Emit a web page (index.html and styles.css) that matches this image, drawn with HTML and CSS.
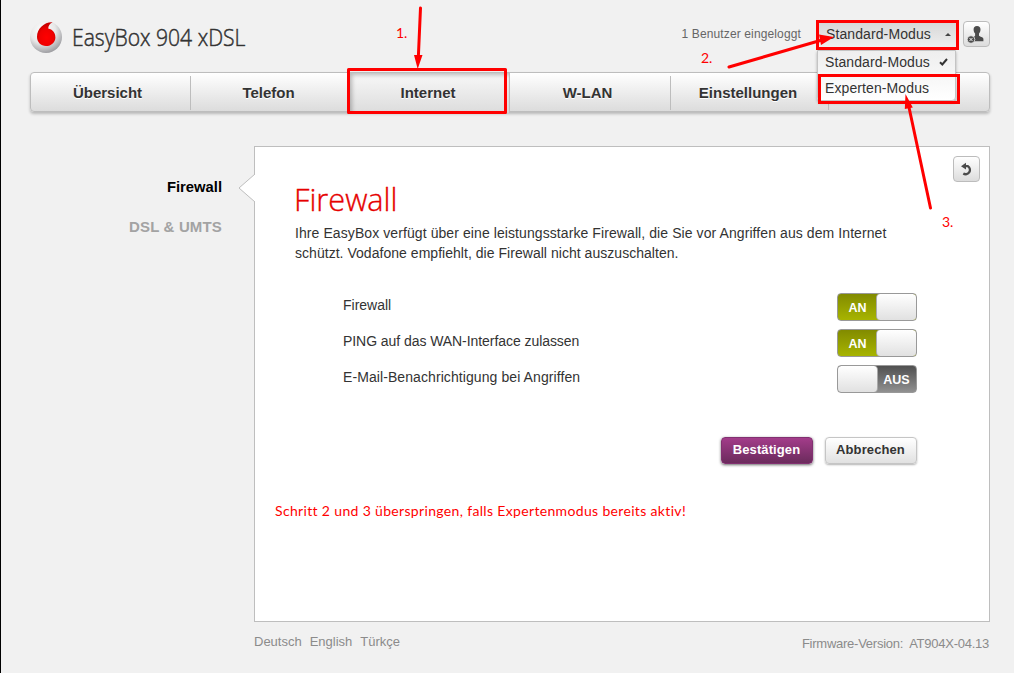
FILE: index.html
```html
<!DOCTYPE html>
<html lang="de">
<head>
<meta charset="utf-8">
<title>EasyBox 904 xDSL</title>
<link rel="stylesheet" href="styles.css">
</head>
<body>
<div class="page">
  <header class="header">
    <svg class="logo" width="34" height="34" viewBox="0 0 34 34">
      <defs>
        <radialGradient id="ball" cx=".4" cy=".3" r=".72"><stop offset="0" stop-color="#fff"/><stop offset=".55" stop-color="#e8e8e8"/><stop offset="1" stop-color="#9c9ca0"/></radialGradient>
        <radialGradient id="drop" cx=".52" cy=".65" r=".55"><stop offset="0" stop-color="#f00"/><stop offset=".7" stop-color="#ee0000"/><stop offset="1" stop-color="#c80000"/></radialGradient>
      </defs>
      <circle cx="16" cy="17" r="16" fill="url(#ball)"/>
      <path d="M22.600 2.200C15 1.600 7 8 7 16.800C7 22.300 11 26 16 26C21.500 26 25.400 22.100 25.400 17.400C25.400 12.600 22.500 9.600 18.200 8.600C18.300 5.700 20 3.200 22.600 2.200Z" fill="url(#drop)"/>
    </svg>
    <h1 class="brand"><span>EasyBox 904 xDSL</span></h1>
    <span class="logged">1 Benutzer eingeloggt</span>
    <div class="mode">
      <div class="mode-current"><span class="mode-text">Standard-Modus</span><i class="caret"></i></div>
      <div class="mode-menu">
        <div class="mode-item"><span class="mode-text">Standard-Modus</span><svg width="9" height="8" viewBox="0 0 9 8"><path d="M1 4.300L3.300 6.500L8 1" fill="none" stroke="#333" stroke-width="2"/></svg></div>
        <div class="mode-item"><span class="mode-text">Experten-Modus</span></div>
      </div>
    </div>
    <button class="icon-button user">
      <svg width="25" height="24" viewBox="0 0 25 24"><path d="M13 4c2.300 0 3.500 1.300 3.500 3.600c0 2.100-.9 3.400-1.500 4v2.200c.6.900 4.400 1.300 4.400 3.300v2.200H7.200v-2.200c0-1.700 3.500-2.300 3.900-3.300v-2.200c-.8-.8-1.500-2-1.500-4C9.600 5.300 10.700 4 13 4Z" fill="#4b4b4b"/><circle cx="7" cy="17.500" r="3.800" fill="#4b4b4b" stroke="#eee" stroke-width=".8"/><path d="M5.400 15.900l3.200 3.200m0-3.200l-3.200 3.200" stroke="#eee" stroke-width="1"/></svg>
    </button>
  </header>
  <nav class="nav">
    <a class="tab first">Übersicht</a>
    <a class="tab telefon">Telefon</a>
    <a class="tab active">Internet</a>
    <a class="tab wlan">W-LAN</a>
    <a class="tab setup">Einstellungen</a>
    <a class="tab last"></a>
  </nav>
  <div class="columns">
    <aside class="side">
      <a class="side-link current">Firewall</a>
      <a class="side-link muted">DSL &amp; UMTS</a>
    </aside>
    <main class="panel">
      <svg class="pointer" width="18" height="30" viewBox="0 0 18 30"><path d="M17 1L1 15L17 29" fill="#fff" stroke="#bebebe"/></svg>
      <button class="icon-button reload"><svg width="25" height="25" viewBox="0 0 25 25"><path d="M10 9.200h3.900a4.300 4.300 0 1 1-4.600 7.400" fill="none" stroke="#4b4b4b" stroke-width="2.300"/><path d="M7 9.200L12 5.800V12.600Z" fill="#4b4b4b"/></svg></button>
      <h2 class="title"><span>Firewall</span></h2>
      <p class="intro"><span class="wide">Ihre EasyBox verfügt über eine leistungsstarke Firewall, die Sie vor Angriffen aus dem Internet</span><br><span class="normal">schützt. Vodafone empfiehlt, die Firewall nicht auszuschalten.</span></p>
      <div class="settings">
        <div class="setting"><span>Firewall</span><div class="switch on"><b>AN</b><i></i></div></div>
        <div class="setting"><span class="tight">PING auf das WAN-Interface zulassen</span><div class="switch on"><b>AN</b><i></i></div></div>
        <div class="setting"><span class="wide">E-Mail-Benachrichtigung bei Angriffen</span><div class="switch off"><i></i><b>AUS</b></div></div>
      </div>
      <div class="actions">
        <button class="button primary">Bestätigen</button>
        <button class="button">Abbrechen</button>
      </div>
      <p class="note">Schritt 2 und 3 überspringen, falls Expertenmodus bereits aktiv!</p>
    </main>
  </div>
  <footer class="footer">
    <div class="languages"><a>Deutsch</a><a>English</a><a>Türkçe</a></div>
    <span class="version">Firmware-Version:&nbsp; AT904X-04.13</span>
  </footer>
  <svg class="marks" width="1014" height="673" viewBox="0 0 1014 673">
    <g fill="none" stroke="#f00" stroke-width="3">
      <rect x="348.500" y="69.500" width="157" height="43" stroke-linejoin="round"/>
      <rect x="817.500" y="21.500" width="140" height="27"/>
      <rect x="819.500" y="75.500" width="139" height="27"/>
      <path d="M420.500 8L418.300 58M729 67L822 40M930.500 208L908.500 105" stroke-linecap="round"/>
    </g>
    <path d="M414 55H422.500L417.700 69ZM819 34.500L834 37L821 45ZM905.500 94L904.800 109L912.800 107.500Z" fill="#f00"/>
    <g class="steps">
      <text x="396" y="38">1.</text>
      <text x="701" y="63">2.</text>
      <text x="942" y="227">3.</text>
    </g>
  </svg>
</div>
</body>
</html>
```
FILE: styles.css
```css
* { box-sizing: border-box; }
body {
  margin: 0;
  background: #f1f1f1;
  color: #333;
  font: 14px "Liberation Sans", Arial, sans-serif;
}
.page {
  position: relative;
  width: 1014px;
  height: 673px;
  overflow: hidden;
  border-left: 1px solid #000;
  padding: 20px 24px 0 29px;
}
.header { display: flex; height: 52px; align-items: flex-start; }
.logo { flex: none; }
.brand {
  margin: 0 auto 0 8px;
  font: 300 24px/34px "Open Sans", "Noto Sans", sans-serif;
  text-shadow: 0 1px 1px #fff;
  -webkit-text-stroke: .5px #333;
}
.brand span { display: inline-block; transform: scaleX(.88); transform-origin: 0 50%; white-space: nowrap; width: 172px; }
.logged { margin: 6px 17px 0 0; font-size: 12px; line-height: 16px; letter-spacing: .13px; color: #666; }
.mode { position: relative; width: 138px; height: 28px; }
.mode-current {
  display: flex; align-items: center; justify-content: space-between;
  height: 28px; padding: 0 5px 0 8px;
  background: linear-gradient(#d5d5d5, #efefef);
}
.mode-text { letter-spacing: .1px; white-space: nowrap; }
.caret { border: 3px solid transparent; border-top: 0; border-bottom: 3px solid #444; }
.mode-menu {
  position: absolute; z-index: 2; left: -1px; top: 30px; width: 139px; height: 51px;
  border: 1px solid #c4c4c4; border-radius: 0 0 4px 4px;
  background: linear-gradient(#eee, #fff);
  box-shadow: 0 2px 3px rgba(0, 0, 0, .3);
}
.mode-item { display: flex; align-items: center; gap: 9px; height: 22px; padding: 0 7px; }
.mode-item + .mode-item { height: 30px; }
.icon-button {
  border: 1px solid #bcbcbc; border-radius: 4px; padding: 0;
  background: linear-gradient(#fff, #dcdcdc);
}
.icon-button svg { display: block; }
.user { width: 27px; height: 26px; margin: 1px 0 0 7px; }
.nav {
  display: grid; grid-template-columns: 160px 159px 160px 161px 158px 1fr;
  height: 40px; width: 960px; padding: 3px 0;
  border: 1px solid #bdbdbd; border-radius: 4px;
  background: linear-gradient(#fff, #dcdcdc);
  box-shadow: 0 2px 3px rgba(0, 0, 0, .24);
}
.tab { border-right: 1px solid #bdbdbd; font-weight: bold; font-size: 15px; line-height: 34px; text-align: center; text-shadow: 0 1px 0 #fff; padding-right: 5px; }
.first { padding-right: 6px; }
.telefon { padding-right: 3px; }
.wlan { padding-right: 5px; }
.setup { padding-right: 3px; }
.active { margin: -3px 0; padding: 3px 3px 3px 0; background: linear-gradient(#f8f8f8, #dcdcdc); box-shadow: inset 2px 2px 4px rgba(0, 0, 0, .25); }
.last { border: 0; }
.columns { display: grid; grid-template-columns: 224px 736px; margin-top: 34px; height: 476px; }
.side { display: flex; flex-direction: column; align-items: flex-end; padding: 31px 32px 0 0; gap: 20px; font-weight: bold; font-size: 15px; line-height: 20px; }
.current { color: #000; font-size: 14.800px; }
.muted { color: #a3a3a3; letter-spacing: .15px; }
.panel { position: relative; border: 1px solid #bebebe; background: #fff; padding: 28px 73px 0 40px; }
.pointer { position: absolute; left: -17px; top: 26px; }
.reload { position: absolute; right: 9px; top: 9px; width: 27px; height: 26px; }
.title { margin: 0 0 0 -1px; height: 48px; font: 300 31px/48px "Open Sans", "Noto Sans", sans-serif; color: #e60000; -webkit-text-stroke: .35px #e60000; }
.title span { display: inline-block; transform: scaleX(.99); transform-origin: 0 50%; }
.intro { margin: 0; line-height: 20px; white-space: nowrap; }
.wide { letter-spacing: .085px; }
.normal { letter-spacing: .035px; }
.tight { letter-spacing: -.06px; }
.settings { margin: 29px 0 0 48px; }
.setting { display: flex; justify-content: space-between; height: 36px; line-height: 26px; }
.switch { display: flex; width: 80px; height: 28px; border: 1px solid #999; border-radius: 4px; overflow: hidden; margin-right: -1px; flex: none; margin-top: 1px; }
.switch b { width: 39px; color: #fff; font-size: 12.500px; line-height: 28px; text-align: center; }
.switch i { flex: 1; margin: 0 -1px; border: 1px solid #aaa; border-width: 0 1px; border-radius: 4px; background: linear-gradient(#fff, #e1e1e1); }
.on { background: linear-gradient(#828b00, #a7b400); }
.off { background: linear-gradient(#505050, #909090); }
.actions { display: flex; justify-content: flex-end; gap: 12px; margin: 37px -1px 0 0; }
.button { width: 92px; height: 27px; padding: 0 1px 2px 0; border: 1px solid #c5c5c5; border-radius: 4px; background: linear-gradient(#fff, #e1e1e1); color: #333; font: bold 13px "Liberation Sans", Arial, sans-serif; letter-spacing: .1px; box-shadow: 0 1px 2px rgba(0, 0, 0, .3); }
.primary { border-color: #823071; background: linear-gradient(#a33c8a, #6b2b5c); color: #fff; box-shadow: 0 1px 3px rgba(0, 0, 0, .6); }
.note { margin: 37px 0 0 -20px; color: #f00; font: 14px/20px Lato, "Noto Sans", sans-serif; letter-spacing: .34px; white-space: nowrap; }
.footer { display: flex; justify-content: space-between; width: 736px; margin: 11px 0 0 224px; color: #8b8b8b; font-size: 13px; line-height: 17px; }
.languages { display: flex; gap: 8px; }
.version { margin: 2px 1px 0 0; letter-spacing: -.25px; }
.marks { position: absolute; z-index: 5; left: -1px; top: 0; pointer-events: none; }
.steps { fill: #f00; font: 14px Lato, "Noto Sans", sans-serif; }
```
